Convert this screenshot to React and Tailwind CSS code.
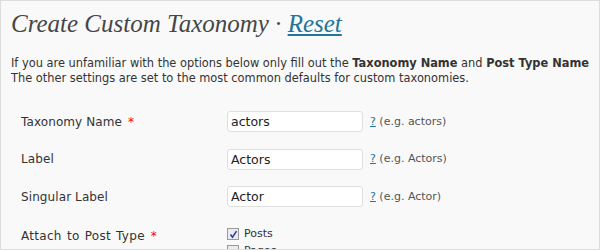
import React from 'react';

const rows = [
  { label: 'Taxonomy Name', required: true, value: 'actors', hint: '(e.g. actors)' },
  { label: 'Label', required: false, value: 'Actors', hint: '(e.g. Actors)' },
  { label: 'Singular Label', required: false, value: 'Actor', hint: '(e.g. Actor)' },
];

function Checkbox({ checked, label }) {
  return (
    <label className="flex items-center gap-[5px] h-[17px]">
      <span className="w-[12px] h-[12px] border border-[#999] bg-[#e9ebef] flex items-center justify-center">
        {checked && (
          <svg width="9" height="9" viewBox="0 0 9 9">
            <path d="M1.5 4.5 L3.5 7.2 L7.5 1.2" fill="none" stroke="#2a3c8f" strokeWidth="1.5" />
          </svg>
        )}
      </span>
      <span>{label}</span>
    </label>
  );
}

export default function App() {
  return (
    <div className="w-[600px] h-[250px] overflow-hidden bg-[#f9f9f9] border border-[#dddddd] text-[#333] font-['DejaVu_Sans',sans-serif] text-[11px]">
      <h2 className="pl-[10px] pt-[8px] text-[25px] leading-[29px] italic text-[#464646] font-['Liberation_Serif',serif]">
        Create Custom Taxonomy · <a href="#" className="text-[#21759b] underline">Reset</a>
      </h2>

      <p className="pl-[10px] mt-[18px] text-[11.4px] leading-[15px] whitespace-nowrap">
        If you are unfamiliar with the options below only fill out the <strong>Taxonomy Name</strong> and <strong>Post Type Name</strong>
        <br />
        The other settings are set to the most common defaults for custom taxonomies.
      </p>

      <div className="mt-[17px] flex flex-col">
        {rows.map((r) => (
          <div key={r.label} className="flex items-center h-[37.5px]">
            <div className="w-[226px] pl-[20px] text-[12px] tracking-[0.1px]">
              {r.label}
              {r.required && <span className="text-[#ff0000] ml-[6px]">*</span>}
            </div>
            <input
              readOnly
              value={r.value}
              className="w-[136px] h-[21px] bg-white border border-[#dfdfdf] rounded-[3px] px-[3px] text-[12.5px] text-[#222] outline-none"
            />
            <span className="ml-[7px] text-[#555]">
              <a href="#" className="text-[#21759b] underline">?</a> {r.hint}
            </span>
          </div>
        ))}
        <div className="flex items-start pt-[10px]">
          <div className="w-[226px] pl-[20px] pt-[1px] text-[12px] tracking-[0.3px] [word-spacing:1px]">
            Attach to Post Type<span className="text-[#ff0000] ml-[6px]">*</span>
          </div>
          <div className="flex flex-col">
            <Checkbox checked label="Posts" />
            <Checkbox label="Pages" />
          </div>
        </div>
      </div>
    </div>
  );
}
